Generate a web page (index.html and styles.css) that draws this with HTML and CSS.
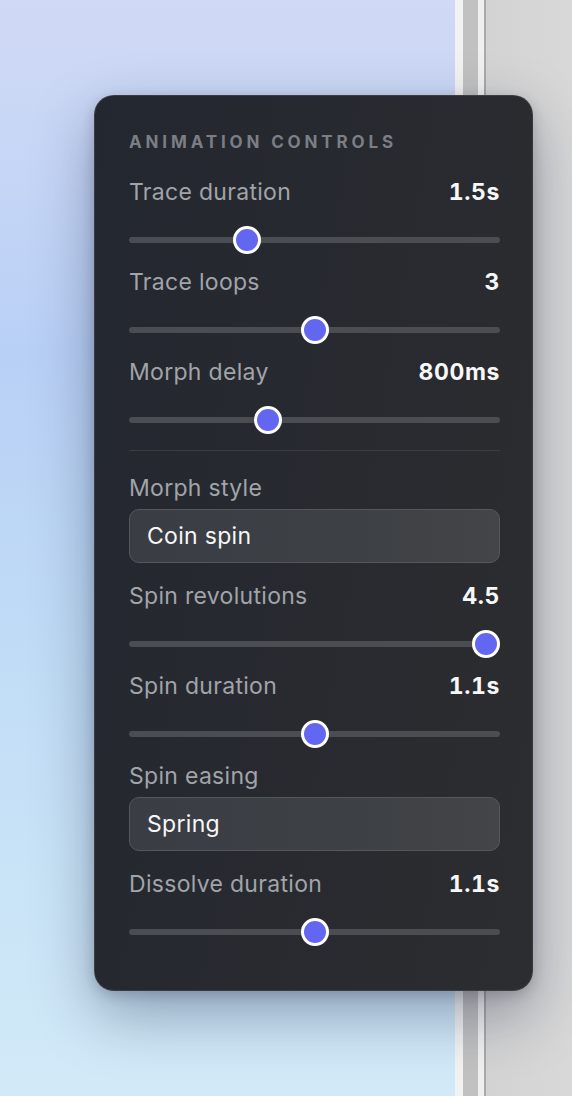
FILE: index.html
```html
<!DOCTYPE html>
<html lang="en">
<head>
<meta charset="utf-8">
<title>Animation controls</title>
<link rel="stylesheet" href="styles.css">
</head>
<body>
<div class="app">
  <div class="canvas"></div>
  <div class="splitter"></div>
  <div class="sidebar"></div>

  <section class="panel">
    <h2 class="panel-title">Animation controls</h2>

    <div class="field slider-field">
      <div class="field-head"><label>Trace duration</label><span class="value">1.5s</span></div>
      <input class="slider" type="range" min="0.2" max="4.5" step="0.1" value="1.5">
    </div>

    <div class="field slider-field">
      <div class="field-head"><label>Trace loops</label><span class="value">3</span></div>
      <input class="slider" type="range" min="1" max="5" step="1" value="3">
    </div>

    <div class="field slider-field">
      <div class="field-head"><label>Morph delay</label><span class="value">800ms</span></div>
      <input class="slider" type="range" min="0" max="2200" step="100" value="800">
    </div>

    <hr class="sep">

    <div class="field select-field">
      <div class="field-head"><label>Morph style</label></div>
      <select class="select">
        <option selected>Coin spin</option>
        <option>Crossfade</option>
        <option>Dissolve</option>
      </select>
    </div>

    <div class="field slider-field">
      <div class="field-head"><label>Spin revolutions</label><span class="value">4.5</span></div>
      <input class="slider" type="range" min="0.5" max="4.5" step="0.5" value="4.5">
    </div>

    <div class="field slider-field">
      <div class="field-head"><label>Spin duration</label><span class="value">1.1s</span></div>
      <input class="slider" type="range" min="0.2" max="2.0" step="0.1" value="1.1">
    </div>

    <div class="field select-field">
      <div class="field-head"><label>Spin easing</label></div>
      <select class="select">
        <option selected>Spring</option>
        <option>Ease in-out</option>
        <option>Linear</option>
      </select>
    </div>

    <div class="field slider-field">
      <div class="field-head"><label>Dissolve duration</label><span class="value">1.1s</span></div>
      <input class="slider" type="range" min="0.2" max="2.0" step="0.1" value="1.1">
    </div>
  </section>
</div>
</body>
</html>
```

FILE: styles.css
```css
* { box-sizing: border-box; }

html, body {
  margin: 0;
  height: 1096px;
  overflow: hidden;
}

body {
  font-family: Inter, "Noto Sans", "Liberation Sans", sans-serif;
}

.app {
  position: relative;
  display: flex;
  height: 1096px;
}

.canvas {
  width: 455px;
  flex: none;
  background: linear-gradient(180deg, #d0d9f5 0%, #c6d6f6 15%, #b9d0f6 32%, #bfdaf6 55%, #c8e3f7 78%, #d2eaf8 100%);
}

.splitter {
  width: 31px;
  flex: none;
  background: linear-gradient(90deg,
    #f2f2f2 0, #f2f2f2 8px,
    #c1c1c1 8px, #c1c1c1 23px,
    #f0f0f0 23px, #f0f0f0 29px,
    #a9a9a9 29px, #a9a9a9 31px);
}

.sidebar {
  flex: 1;
  background: linear-gradient(90deg, #d3d3d3, #d8d8d8);
}

.panel {
  position: absolute;
  left: 94px;
  top: 95px;
  width: 439px;
  display: flex;
  flex-direction: column;
  padding: 36px 32px 30px 34px;
  border: 1px solid rgba(255, 255, 255, 0.09);
  border-radius: 20px;
  background: linear-gradient(100deg, #23272f 0%, #282a30 55%, #2c2d2f 100%);
  box-shadow: 0 24px 60px rgba(20, 30, 60, 0.35), 0 4px 14px rgba(0, 0, 0, 0.18);
}

.panel-title {
  margin: 0 0 26px;
  height: 20px;
  line-height: 20px;
  font-size: 17px;
  font-weight: 700;
  letter-spacing: 3.85px;
  text-transform: uppercase;
  color: #7b7e84;
  white-space: nowrap;
}

.field-head {
  display: flex;
  justify-content: space-between;
  align-items: center;
  height: 28px;
}

.field-head label {
  font-size: 23px;
  line-height: 28px;
  letter-spacing: 0.3px;
  color: #a1a4a9;
}

.value {
  font-size: 23px;
  line-height: 28px;
  font-weight: 700;
  letter-spacing: 0.6px;
  font-variant-numeric: tabular-nums;
  color: #f7f7f8;
}

.slider-field {
  margin-bottom: 14px;
}

.select-field {
  margin-bottom: 19px;
}

.slider {
  -webkit-appearance: none;
  appearance: none;
  display: block;
  width: 100%;
  height: 28px;
  margin: 20px 0 0;
  padding: 0;
  background: transparent;
}

.slider::-webkit-slider-runnable-track {
  height: 6px;
  border-radius: 3px;
  background: #4a4d52;
}

.slider::-webkit-slider-thumb {
  -webkit-appearance: none;
  appearance: none;
  box-sizing: border-box;
  width: 28px;
  height: 28px;
  margin-top: -11px;
  border-radius: 50%;
  border: 3px solid #ffffff;
  background: #6366f1;
}

.sep {
  margin: 2px 0 23px;
  height: 1px;
  border: none;
  background: #3a3d42;
  flex: none;
}

.select {
  -webkit-appearance: none;
  appearance: none;
  display: block;
  width: 100%;
  height: 54px;
  margin-top: 7px;
  padding: 0 17px;
  border: 1px solid #54575c;
  border-radius: 10px;
  background: linear-gradient(90deg, #3a3d43 0%, #3d4045 60%, #434547 100%);
  font-family: inherit;
  font-size: 23px;
  letter-spacing: 0.3px;
  color: #f7f7f8;
}
```
